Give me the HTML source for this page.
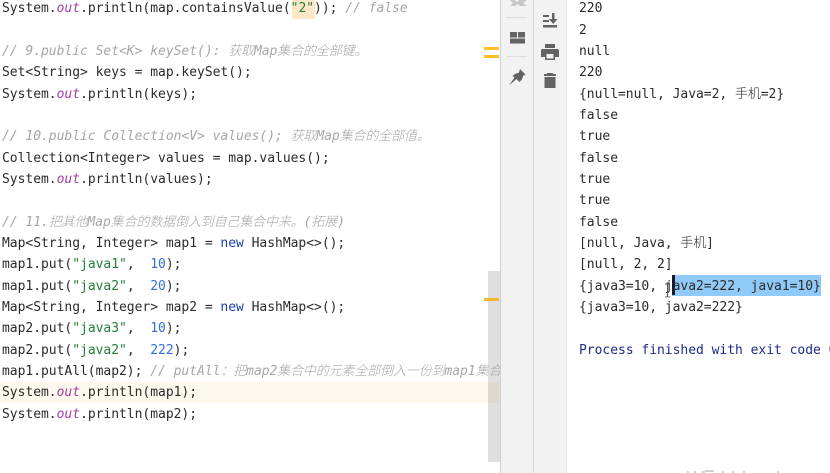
<!DOCTYPE html>
<html><head><meta charset="utf-8">
<style>
html,body{margin:0;padding:0;background:#fff;}
#r{position:relative;width:830px;height:473px;overflow:hidden;background:#fff;font-family:"DejaVu Sans Mono","Noto Sans CJK SC",monospace;font-size:13px;letter-spacing:-0.026px;color:#2b2b2b;}
.l{position:absolute;white-space:pre;height:21px;line-height:21px;}
.e{left:2px;width:498px;overflow:hidden;margin-top:1px;}
.o{left:579px;margin-top:1px;}
i.f{color:#a0409f;font-style:italic;}
.c{color:#a6a6a6;font-style:italic;}
.cj{font-family:"Noto Sans CJK SC",sans-serif;font-size:13px;letter-spacing:-0.15px;font-weight:300;line-height:0;}
.s{color:#1f7f3c;}
.n{color:#2f6fdb;}
.k{color:#1c3fa8;}
.b{position:absolute;}
</style></head><body>
<div id="r">
<div class="b" style="left:0;top:382px;width:499px;height:21px;background:#fdf8ee"></div>
<div class="b" style="left:488px;top:271px;width:12px;height:191px;background:#000;opacity:.125"></div>
<div class="b" style="left:292px;top:0;width:23px;height:19px;background:#fce8c6"></div>
<div class="b" style="left:500px;top:0;width:66px;height:473px;background:#f2f2f2"></div>
<div class="b" style="left:500px;top:0;width:1px;height:473px;background:#d0d0d0"></div>
<div class="b" style="left:533px;top:0;width:1px;height:473px;background:#d4d4d4"></div>
<div class="b" style="left:566px;top:0;width:1px;height:473px;background:#e8e8e8"></div>
<div class="b" style="left:484px;top:47px;width:15px;height:3px;background:#fbc02d"></div>
<div class="b" style="left:484px;top:55px;width:15px;height:3px;background:#fbc02d"></div>
<div class="b" style="left:484px;top:298px;width:15px;height:3px;background:#f4b92e"></div>
<div class="b" style="left:506px;top:17px;width:21px;height:1px;background:#dcdcdc"></div>
<div class="b" style="left:506px;top:56px;width:21px;height:1px;background:#dcdcdc"></div>
<svg class="b" style="left:500px;top:0" width="66" height="95" viewBox="0 0 66 95">
<path d="M10 0h5l2 2 2-2h7v1l-3 2 3 2v1h-6l-2-2-3 2h-5l3-3z" fill="#c8c8c8"/>
<path d="M10 32h7v5.500h-7zM18 32h7v5.500h-7zM10 38.500h15v5h-15z" fill="#636363"/>
<path d="M20 69L25.500 74.500L23.500 75.500L21.500 80L19.500 82L16.500 79L9 85.500L14.500 77.500L12.500 76L15 74L19 72.500Z" fill="#636363"/>
<path d="M43 15h6v2h-6zM43 20h6v2h-6zM43 25h14v2.500h-14zM52 13h2.500v6h3l-4.250 5-4.250-5h3z" fill="#636363"/>
<path d="M45 44h10v4h-10zM42 49h15q2 0 2 2v6h-4v3h-10v-3h-4v-6q0-2 1-2zM46.500 54v4.500h7v-4.500z" fill="#636363" fill-rule="evenodd"/>
<path d="M47 73h6v1h3v2h-12v-2h3zM44.500 77h11v11h-11z" fill="#636363"/>
</svg>
<div class="b" style="left:672px;top:275px;width:149px;height:21px;background:#90caf9"></div>
<div class="b" style="left:672px;top:275px;width:3px;height:20px;background:#1a1a2e"></div>

<div class="l e" style="top:-3px">System.<i class="f">out</i>.println(map.containsValue(<span class="s">"2"</span>)); <span class="c">// false</span></div>
<div class="l e c" style="top:40px">// 9.public Set&lt;K&gt; keySet(): <span class="cj">获取</span>Map<span class="cj">集合的全部键。</span></div>
<div class="l e" style="top:61px">Set&lt;String&gt; keys = map.keySet();</div>
<div class="l e" style="top:83px">System.<i class="f">out</i>.println(keys);</div>
<div class="l e c" style="top:125px">// 10.public Collection&lt;V&gt; values(); <span class="cj">获取</span>Map<span class="cj">集合的全部值。</span></div>
<div class="l e" style="top:147px">Collection&lt;Integer&gt; values = map.values();</div>
<div class="l e" style="top:168px">System.<i class="f">out</i>.println(values);</div>
<div class="l e c" style="top:211px">// 11.<span class="cj">把其他</span>Map<span class="cj">集合的数据倒入到自己集合中来。</span>(<span class="cj">拓展</span>)</div>
<div class="l e" style="top:232px">Map&lt;String, Integer&gt; map1 = <span class="k">new</span> HashMap&lt;&gt;();</div>
<div class="l e" style="top:253px">map1.put(<span class="s">"java1"</span>,  <span class="n">10</span>);</div>
<div class="l e" style="top:275px">map1.put(<span class="s">"java2"</span>,  <span class="n">20</span>);</div>
<div class="l e" style="top:296px">Map&lt;String, Integer&gt; map2 = <span class="k">new</span> HashMap&lt;&gt;();</div>
<div class="l e" style="top:317px">map2.put(<span class="s">"java3"</span>,  <span class="n">10</span>);</div>
<div class="l e" style="top:339px">map2.put(<span class="s">"java2"</span>,  <span class="n">222</span>);</div>
<div class="l e" style="top:360px">map1.putAll(map2); <span class="c">// putAll<span class="cj">：把</span>map2<span class="cj">集合中的元素全部倒入一份到</span>map1<span class="cj">集合</span></span></div>
<div class="l e" style="top:381px">System.<i class="f">out</i>.println(map1);</div>
<div class="l e" style="top:403px">System.<i class="f">out</i>.println(map2);</div>

<div class="l o" style="top:-3px">220</div>
<div class="l o" style="top:19px">2</div>
<div class="l o" style="top:40px">null</div>
<div class="l o" style="top:61px">220</div>
<div class="l o" style="top:83px">{null=null, Java=2, <span class="cj">手机</span>=2}</div>
<div class="l o" style="top:104px">false</div>
<div class="l o" style="top:125px">true</div>
<div class="l o" style="top:147px">false</div>
<div class="l o" style="top:168px">true</div>
<div class="l o" style="top:189px">true</div>
<div class="l o" style="top:211px">false</div>
<div class="l o" style="top:232px">[null, Java, <span class="cj">手机</span>]</div>
<div class="l o" style="top:253px">[null, 2, 2]</div>
<div class="l o" style="top:275px">{java3=10, java2=222, java1=10}</div>
<div class="l o" style="top:296px">{java3=10, java2=222}</div>
<div class="l o" style="top:339px;color:#1e2a8c">Process finished with exit code 0</div>
<svg class="b" style="left:663px;top:283px" width="9" height="15" viewBox="0 0 9 15"><path d="M2 1h2M6 1h-2M4.500 1v13M2 14h2M7 14h-2" stroke="#555" stroke-width="1" fill="none"/></svg>
<svg class="b" style="left:685px;top:470px" width="110" height="3" viewBox="0 0 110 3"><path d="M2 2h2M9 2h2M17 2h3M20 1h9M37 2h2M47 2h2M58 2h2M92 2h2" stroke="#c4c4c4" stroke-width="1.500" fill="none"/></svg>
</div>
</body></html>
